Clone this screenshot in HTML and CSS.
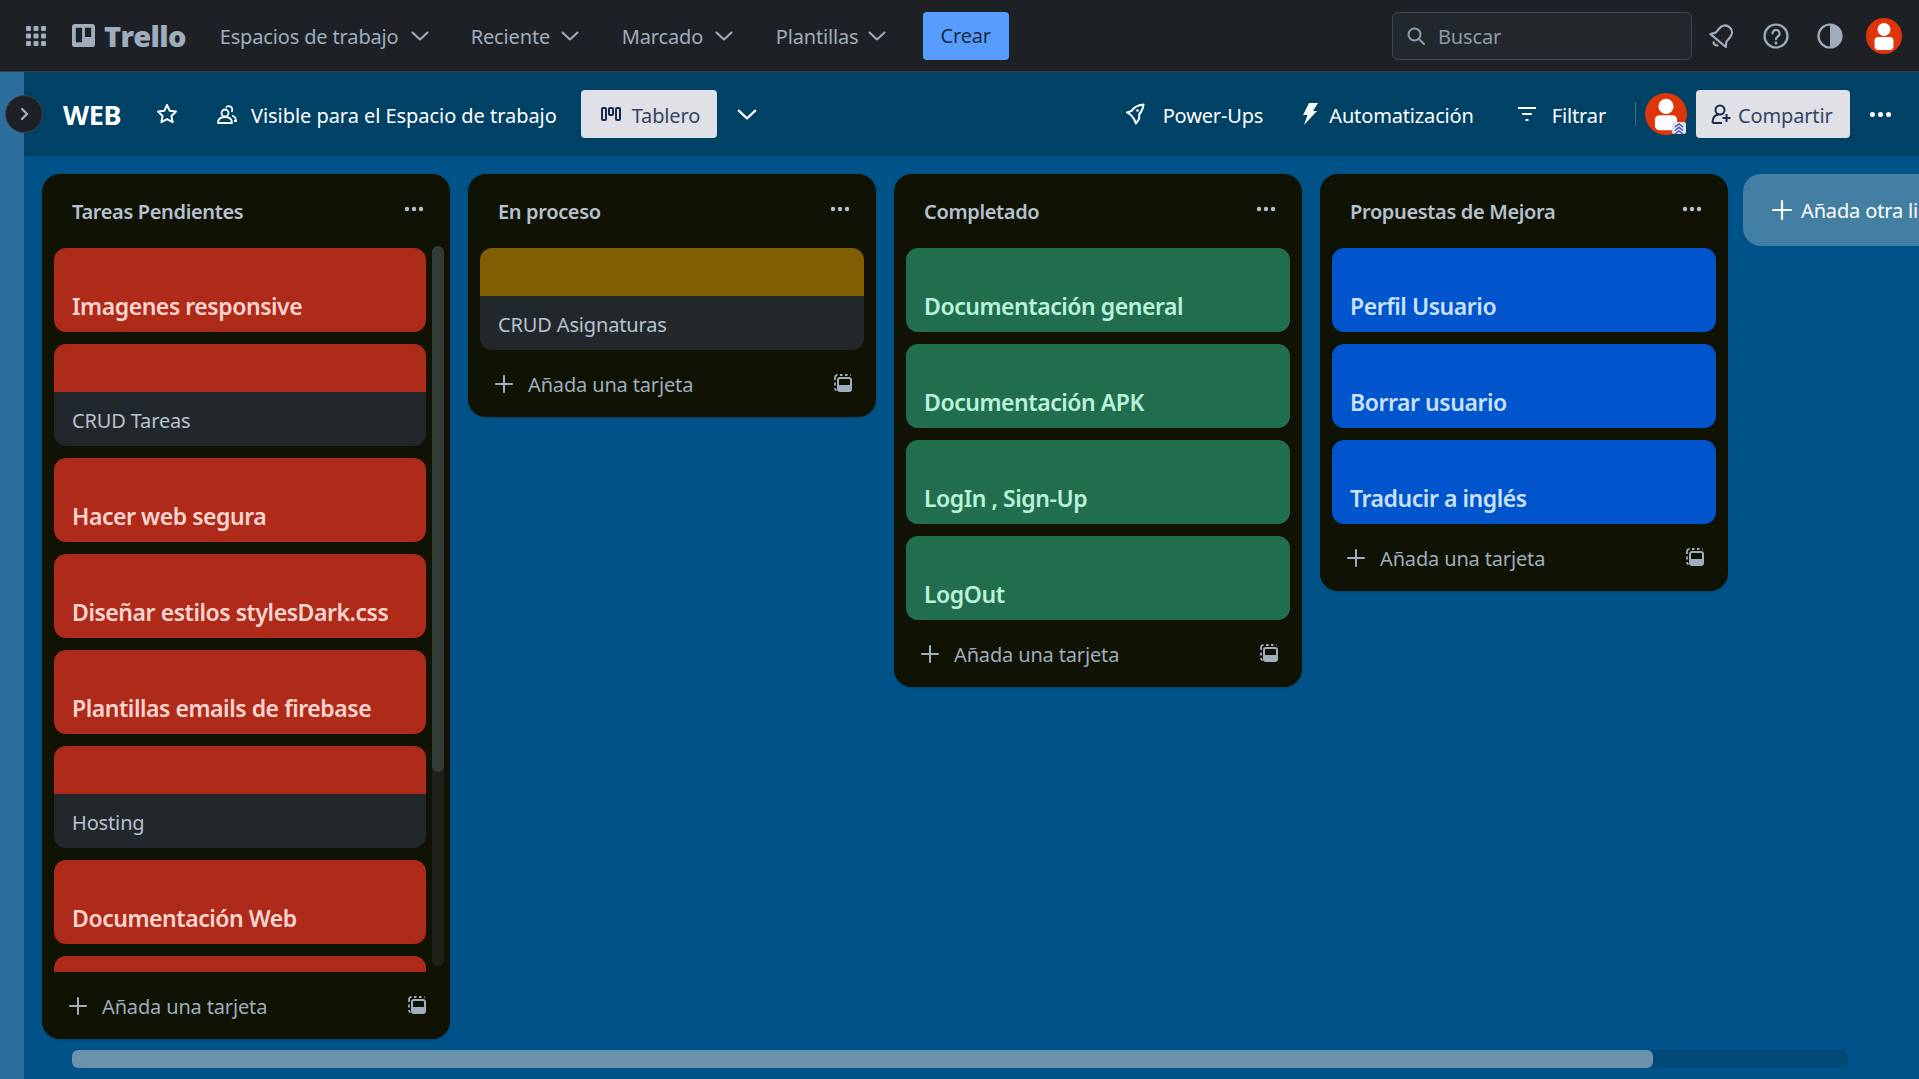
FILE: index.html
```html
<!DOCTYPE html>
<html lang="es">
<head>
<meta charset="utf-8">
<title>WEB | Trello</title>
<link rel="stylesheet" href="styles.css">
</head>
<body>
<svg class="defs" width="0" height="0">
  <symbol id="chev" viewBox="0 0 18 10"><path d="M1.5 1.5 9 8.5l7.5-7" fill="none" stroke="currentColor" stroke-width="2" stroke-linecap="round" stroke-linejoin="round"/></symbol>
  <symbol id="plus" viewBox="0 0 18 18"><path d="M9 1v16M1 9h16" stroke="currentColor" stroke-width="2" stroke-linecap="round"/></symbol>
  <symbol id="dots" viewBox="0 0 20 6"><circle cx="3" cy="3" r="2.2" fill="currentColor"/><circle cx="10" cy="3" r="2.2" fill="currentColor"/><circle cx="17" cy="3" r="2.2" fill="currentColor"/></symbol>
  <symbol id="tpl" viewBox="0 0 18 18"><path d="M1 6V3.500A2.500 2.500 0 0 1 3.500 1M1 8.500v3M1 14c0 1 .6 2 1.500 2.500M6 1h2.500M11 1h2.500M16 1h.5" fill="none" stroke="currentColor" stroke-width="1.800"/><rect x="4" y="4" width="13" height="13" rx="2" fill="none" stroke="currentColor" stroke-width="2"/><rect x="4" y="11" width="13" height="6" rx="1" fill="currentColor"/></symbol>
  <symbol id="avatar" viewBox="0 0 36 36"><circle cx="18" cy="18" r="18" fill="#de350b"/><circle cx="18" cy="11.5" r="6.5" fill="#fff"/><rect x="8.5" y="19" width="19" height="13" rx="4" fill="#fff"/></symbol>
</svg>

<header class="topbar">
  <svg class="grid-icon" viewBox="0 0 20 20"><g fill="currentColor"><rect x="0" y="0" width="5" height="5" rx="1"/><rect x="7.500" y="0" width="5" height="5" rx="1"/><rect x="15" y="0" width="5" height="5" rx="1"/><rect x="0" y="7.500" width="5" height="5" rx="1"/><rect x="7.500" y="7.500" width="5" height="5" rx="1"/><rect x="15" y="7.500" width="5" height="5" rx="1"/><rect x="0" y="15" width="5" height="5" rx="1"/><rect x="7.500" y="15" width="5" height="5" rx="1"/><rect x="15" y="15" width="5" height="5" rx="1"/></g></svg>
  <div class="logo">
    <svg class="logo-mark" viewBox="0 0 24 24"><path fill-rule="evenodd" d="M3 0h18a3 3 0 0 1 3 3v18a3 3 0 0 1-3 3H3a3 3 0 0 1-3-3V3a3 3 0 0 1 3-3Zm1 4v15h6.500V4Zm9.500 0v9.500H20V4Z" fill="currentColor"/></svg>
    <span class="logo-text">Trello</span>
  </div>
  <nav class="nav">
    <div class="nav-item nav-w1"><span>Espacios de trabajo</span><svg class="chev"><use href="#chev"/></svg></div>
    <div class="nav-item nav-w2"><span>Reciente</span><svg class="chev"><use href="#chev"/></svg></div>
    <div class="nav-item nav-w3"><span>Marcado</span><svg class="chev"><use href="#chev"/></svg></div>
    <div class="nav-item nav-w4"><span>Plantillas</span><svg class="chev"><use href="#chev"/></svg></div>
  </nav>
  <button class="create"><span>Crear</span></button>
  <div class="top-right">
    <div class="search">
      <svg class="search-icon" viewBox="0 0 18 18"><circle cx="7.500" cy="7.500" r="6" fill="none" stroke="currentColor" stroke-width="2"/><path d="m12 12 5 5" stroke="currentColor" stroke-width="2" stroke-linecap="round"/></svg>
      <span>Buscar</span>
    </div>
    <svg class="top-icon bell" viewBox="0 0 26 26"><g transform="rotate(40 13 13)" fill="none" stroke="currentColor" stroke-width="2.200" stroke-linejoin="round"><path d="M13 1.500c-4.500 0-7 3.200-7 7.500v5.500L3 19h20l-3-4.500V9c0-4.300-2.500-7.500-7-7.500Z"/><path d="M10 22.500a3.500 3.500 0 0 0 6 0"/></g></svg>
    <svg class="top-icon" viewBox="0 0 26 26"><circle cx="13" cy="13" r="11.500" fill="none" stroke="currentColor" stroke-width="2.200"/><path d="M9.500 10.500a3.500 3.500 0 1 1 5.500 2.800c-1.300.9-2 1.500-2 3" fill="none" stroke="currentColor" stroke-width="2.200" stroke-linecap="round"/><circle cx="13" cy="20" r="1.500" fill="currentColor"/></svg>
    <svg class="top-icon" viewBox="0 0 26 26"><circle cx="13" cy="13" r="11.500" fill="none" stroke="currentColor" stroke-width="2.200"/><path d="M13 1.500a11.500 11.500 0 0 1 0 23Z" fill="currentColor"/></svg>
    <svg class="top-avatar"><use href="#avatar"/></svg>
  </div>
</header>

<div class="main">
  <aside class="strip"></aside>
  <button class="collapse"><svg viewBox="0 0 10 14"><path d="m2 2 5 5-5 5" fill="none" stroke="currentColor" stroke-width="2.400" stroke-linecap="round" stroke-linejoin="round"/></svg></button>
  <div class="content">
    <div class="board-head">
      <h1 class="board-title">WEB</h1>
      <svg class="star" viewBox="0 0 22 22"><path d="m11 2 2.700 5.800 6.300.8-4.600 4.300 1.200 6.300-5.600-3.100-5.600 3.100 1.200-6.300L2 8.600l6.300-.8Z" fill="none" stroke="currentColor" stroke-width="2" stroke-linejoin="round"/></svg>
      <div class="head-item visible">
        <svg class="ic-20" viewBox="0 0 20 22"><circle cx="8" cy="10" r="3.500" fill="none" stroke="currentColor" stroke-width="1.800"/><path d="M1 20c0-4 3-6 7-6s7 2 7 6Z" fill="none" stroke="currentColor" stroke-width="1.800" stroke-linejoin="round"/><path d="M9 4.500A3.500 3.500 0 1 1 14.500 9M15 12.500c2.500.8 4 2.700 4 5.500h-2" fill="none" stroke="currentColor" stroke-width="1.800"/></svg>
        <span>Visible para el Espacio de trabajo</span>
      </div>
      <button class="light-btn tablero">
        <svg class="board-ic" viewBox="0 0 20 14"><g fill="none" stroke="currentColor" stroke-width="2"><rect x="1" y="1" width="4" height="12" rx="1"/><rect x="8" y="1" width="4" height="7" rx="1"/><rect x="15" y="1" width="4" height="12" rx="1"/></g></svg>
        <span>Tablero</span>
      </button>
      <svg class="view-chev"><use href="#chev"/></svg>
      <div class="head-right">
        <div class="head-item powerups">
          <svg class="ic-rocket" viewBox="0 0 20 22"><path d="M18.500 1.500C13 2 9 4 6.500 8L2 9.500l4 2.500 3 4 2 4.500 3-4.500c.5-1.500.2-3 .2-4.500 2.500-3 4-6 4.300-10Z" fill="none" stroke="currentColor" stroke-width="2" stroke-linejoin="round"/><circle cx="12.500" cy="7.500" r="1.300" fill="currentColor"/></svg>
          <span>Power-Ups</span>
        </div>
        <div class="head-item auto">
          <svg class="ic-bolt" viewBox="0 0 16 22"><path d="M7 0h9L11 8h4L2 22l3.500-10H1Z" fill="currentColor"/></svg>
          <span>Automatización</span>
        </div>
        <div class="head-item filter">
          <svg class="ic-filter" viewBox="0 0 18 14"><path d="M0 1h18M4 7h10M7.500 13h3" stroke="currentColor" stroke-width="2"/></svg>
          <span>Filtrar</span>
        </div>
        <div class="divider"></div>
        <div class="member">
          <svg class="member-avatar"><use href="#avatar"/></svg>
          <svg class="member-badge" viewBox="0 0 14 12"><rect width="14" height="12" rx="2" fill="#dfe1e6"/><path d="m3 5 4-3 4 3M3 8.500l4-3 4 3M3 12l4-3 4 3" fill="none" stroke="#4a50c9" stroke-width="1.500"/></svg>
        </div>
        <button class="light-btn share">
          <svg class="share-ic" viewBox="0 0 20 20"><circle cx="9" cy="6" r="4.500" fill="none" stroke="currentColor" stroke-width="2"/><path d="M1.500 19c0-5 2.500-8 6-8.500M1.500 19H11M15.500 10v8M11.500 14h8" fill="none" stroke="currentColor" stroke-width="2"/></svg>
          <span>Compartir</span>
        </button>
        <svg class="head-dots"><use href="#dots"/></svg>
      </div>
    </div>

    <div class="canvas">
      <section class="list list-scroll">
        <div class="list-head"><h2>Tareas Pendientes</h2><svg class="list-dots"><use href="#dots"/></svg></div>
        <div class="list-body">
          <div class="cards">
            <article class="card full red"><span>Imagenes responsive</span></article>
            <article class="card red"><div class="cover"></div><div class="card-body">CRUD Tareas</div></article>
            <article class="card full red"><span>Hacer web segura</span></article>
            <article class="card full red"><span>Diseñar estilos stylesDark.css</span></article>
            <article class="card full red"><span>Plantillas emails de firebase</span></article>
            <article class="card red"><div class="cover"></div><div class="card-body">Hosting</div></article>
            <article class="card full red"><span>Documentación Web</span></article>
            <article class="card full red"></article>
          </div>
          <div class="v-track"><div class="v-thumb"></div></div>
        </div>
        <div class="list-foot"><svg class="foot-plus"><use href="#plus"/></svg><span>Añada una tarjeta</span><svg class="foot-tpl"><use href="#tpl"/></svg></div>
      </section>

      <section class="list">
        <div class="list-head"><h2>En proceso</h2><svg class="list-dots"><use href="#dots"/></svg></div>
        <div class="cards">
          <article class="card yellow"><div class="cover"></div><div class="card-body">CRUD Asignaturas</div></article>
        </div>
        <div class="list-foot"><svg class="foot-plus"><use href="#plus"/></svg><span>Añada una tarjeta</span><svg class="foot-tpl"><use href="#tpl"/></svg></div>
      </section>

      <section class="list">
        <div class="list-head"><h2>Completado</h2><svg class="list-dots"><use href="#dots"/></svg></div>
        <div class="cards">
          <article class="card full green"><span>Documentación general</span></article>
          <article class="card full green"><span>Documentación APK</span></article>
          <article class="card full green"><span>LogIn , Sign-Up</span></article>
          <article class="card full green"><span>LogOut</span></article>
        </div>
        <div class="list-foot"><svg class="foot-plus"><use href="#plus"/></svg><span>Añada una tarjeta</span><svg class="foot-tpl"><use href="#tpl"/></svg></div>
      </section>

      <section class="list">
        <div class="list-head"><h2>Propuestas de Mejora</h2><svg class="list-dots"><use href="#dots"/></svg></div>
        <div class="cards">
          <article class="card full blue"><span>Perfil Usuario</span></article>
          <article class="card full blue"><span>Borrar usuario</span></article>
          <article class="card full blue"><span>Traducir a inglés</span></article>
        </div>
        <div class="list-foot"><svg class="foot-plus"><use href="#plus"/></svg><span>Añada una tarjeta</span><svg class="foot-tpl"><use href="#tpl"/></svg></div>
      </section>

      <div class="add-list"><svg class="add-plus"><use href="#plus"/></svg><span>Añada otra lista</span></div>
    </div>

    <div class="h-track"><div class="h-thumb"></div></div>
  </div>
</div>
</body>
</html>
```
FILE: styles.css
```css
* { box-sizing: border-box; }
html, body { margin: 0; height: 100%; overflow: hidden; }
body {
  font-family: "Noto Sans", "Open Sans", "Liberation Sans", sans-serif;
  font-size: 20px;
  letter-spacing: -0.15px;
  color: #fff;
  background: #005388;
  display: flex;
  flex-direction: column;
}
button { font: inherit; letter-spacing: inherit; border: 0; }
svg { display: block; flex: none; }
.defs { position: absolute; }

/* Top bar */
.topbar {
  height: 72px;
  flex: none;
  display: flex;
  align-items: center;
  background: #1d2125;
  border-bottom: 1px solid #3a4248;
  color: #9fadbc;
  padding-left: 26px;
}
.grid-icon { width: 20px; height: 20px; }
.logo { display: flex; align-items: center; margin-left: 26px; color: #9fadbc; gap: 9px; }
.logo-mark { width: 23px; height: 23px; }
.logo-text { font-family: "Open Sans", sans-serif; font-weight: 800; font-size: 29px; letter-spacing: -0.7px; line-height: 1; }
.nav { display: flex; margin-left: 34px; }
.nav-item { display: flex; align-items: center; justify-content: space-between; }
.nav-item span, .search span, .create span { padding-top: 2px; }
.nav-w1 { width: 209px; margin-right: 42px; }
.nav-w2 { width: 108px; margin-right: 43px; }
.nav-w3 { width: 111px; margin-right: 43px; }
.nav-w4 { width: 110px; }
.chev { width: 18px; height: 10px; }
.create {
  width: 86px;
  height: 48px;
  margin-left: 37px;
  background: #579dff;
  color: #1d2a3d;
  border-radius: 4px;
  padding: 0;
}
.top-right { margin-left: auto; display: flex; align-items: center; padding-right: 17px; }
.search {
  width: 300px;
  height: 48px;
  display: flex;
  align-items: center;
  gap: 13px;
  padding-left: 14px;
  background: #22272b;
  border: 1px solid #3e464d;
  border-radius: 6px;
  color: #8c9bab;
}
.search-icon { width: 18px; height: 18px; }
.top-icon { width: 26px; height: 26px; margin-left: 28px; }
.bell { margin-left: 17px; }
.top-avatar { width: 36px; height: 36px; margin-left: 23px; }

/* Main */
.main { flex: 1; display: flex; position: relative; min-height: 0; }
.strip { width: 24px; flex: none; background: #2c6e9b; }
.collapse {
  position: absolute;
  left: 5px;
  top: 23px;
  width: 38px;
  height: 38px;
  padding: 0 0 0 2px;
  border-radius: 50%;
  background: #1d2125;
  border: 1px solid #3a4248;
  color: #9fadbc;
  display: flex;
  align-items: center;
  justify-content: center;
}
.collapse svg { width: 10px; height: 14px; }
.content { flex: 1; min-width: 0; display: flex; flex-direction: column; }

/* Board header */
.board-head {
  height: 84px;
  flex: none;
  display: flex;
  align-items: center;
  background: #004166;
  padding-left: 39px;
}
.board-title { margin: 0; font-size: 27px; font-weight: 700; letter-spacing: -0.4px; line-height: 1; width: 60px; }
.star { width: 22px; height: 22px; margin-left: 33px; }
.head-item { display: flex; align-items: center; }
.head-item span, .light-btn span { padding-top: 2px; }
.visible { margin-left: 39px; gap: 14px; letter-spacing: -0.05px; }
.ic-20 { width: 20px; height: 22px; }
.light-btn {
  height: 48px;
  background: #dfe1e6;
  color: #344563;
  border-radius: 4px;
  display: flex;
  align-items: center;
  padding: 0;
}
.tablero { width: 136px; margin-left: 24px; padding-left: 20px; gap: 11px; }
.board-ic { width: 20px; height: 14px; color: #172b4d; }
.view-chev { width: 20px; height: 11px; margin-left: 20px; }
.head-right { margin-left: auto; display: flex; align-items: center; padding-right: 27px; }
.powerups { gap: 18px; }
.ic-rocket { width: 20px; height: 22px; }
.auto { gap: 11px; margin-left: 39px; }
.ic-bolt { width: 16px; height: 22px; }
.filter { gap: 16px; margin-left: 44px; }
.ic-filter { width: 18px; height: 14px; }
.divider { width: 1px; height: 24px; background: #3d6f8f; margin-left: 29px; }
.member { position: relative; margin-left: 9px; width: 42px; height: 42px; }
.member-avatar { width: 42px; height: 42px; }
.member-badge { position: absolute; right: 1px; bottom: 1px; width: 14px; height: 12px; }
.share { width: 154px; margin-left: 9px; padding-left: 15px; gap: 7px; }
.share-ic { width: 20px; height: 20px; color: #172b4d; }
.head-dots { width: 23px; height: 7px; margin-left: 19px; }

/* Canvas */
.canvas {
  flex: 1;
  min-height: 0;
  display: flex;
  align-items: flex-start;
  gap: 18px;
  padding: 18px 0 0 18px;
  overflow: hidden;
}
.list {
  width: 408px;
  flex: none;
  background: #101204;
  border-radius: 18px;
  box-shadow: 0 1px 2px rgba(9, 30, 66, 0.3);
}
.list-scroll { height: 865px; display: flex; flex-direction: column; }
.list-head {
  height: 74px;
  display: flex;
  align-items: center;
  justify-content: space-between;
  padding: 0 26px 0 30px;
  color: #b6c2cf;
}
.list-head h2 { margin: 0; font-size: 20px; font-weight: 600; letter-spacing: -0.35px; }
.list-dots { width: 20px; height: 6px; margin-top: -5px; }
.cards { display: flex; flex-direction: column; gap: 12px; padding: 0 12px; }
.list-body { position: relative; height: 724px; flex: none; }
.list-scroll .cards { width: 396px; height: 724px; overflow: hidden; }
.v-track {
  position: absolute;
  left: 390px;
  top: -2px;
  width: 12px;
  height: 720px;
  background: #1e2118;
  border-radius: 6px;
}
.v-thumb { height: 526px; background: #323b36; border-radius: 6px; }
.card { border-radius: 12px; overflow: hidden; flex: none; background: #22272b; }
.card.full { height: 84px; display: flex; align-items: flex-end; padding: 0 18px 10px; font-size: 23px; font-weight: 600; letter-spacing: -0.45px; }
.cover { height: 48px; }
.card-body { height: 54px; padding: 15px 18px 0; color: #b6c2cf; line-height: 28px; }
.red.full, .red .cover { background: #ae2a19; }
.red.full { color: #ffd5d2; }
.green.full { background: #216e4e; color: #baf3db; }
.blue.full { background: #0055cc; color: #cce0ff; }
.yellow .cover { background: #7f5f01; }
.list-foot {
  height: 67px;
  display: flex;
  align-items: center;
  padding: 2px 24px 0 27px;
  color: #9fadbc;
}
.foot-plus { width: 18px; height: 18px; margin-top: -2px; }
.list-foot span { margin-left: 15px; }
.foot-tpl { width: 18px; height: 18px; margin-left: auto; margin-top: -4px; }

.add-list {
  width: 408px;
  height: 72px;
  flex: none;
  margin-left: -3px;
  display: flex;
  align-items: center;
  gap: 9px;
  padding-left: 29px;
  background: #437fa3;
  border-radius: 18px;
  font-size: 20px;
}
.add-plus { width: 20px; height: 20px; }

/* Horizontal scrollbar */
.h-track {
  flex: none;
  width: 1776px;
  height: 18px;
  margin: 0 0 11px 48px;
  background: #004a75;
  border-radius: 6px;
}
.h-thumb { width: 1581px; height: 100%; background: #6b93ab; border-radius: 6px; }
```
